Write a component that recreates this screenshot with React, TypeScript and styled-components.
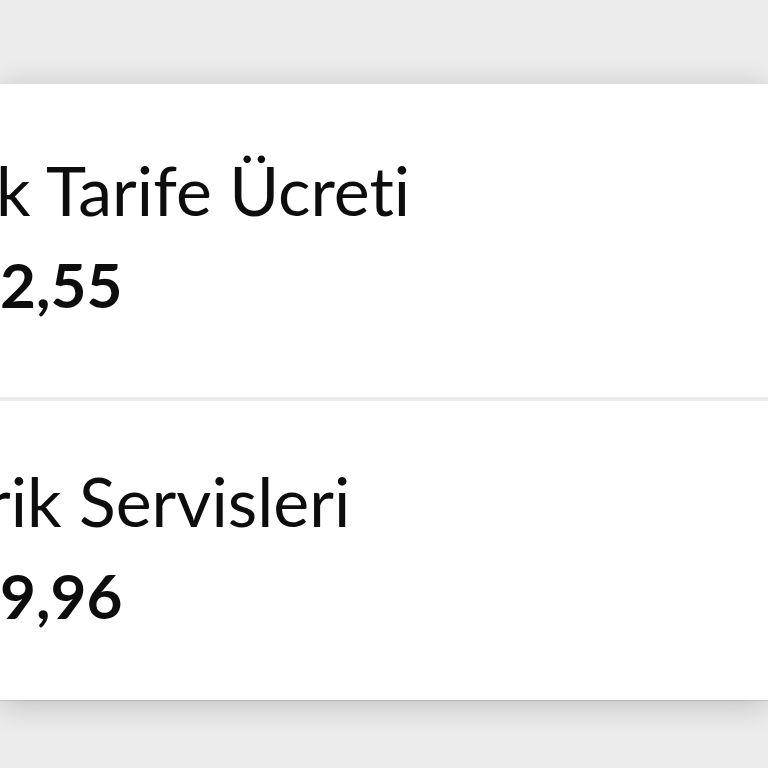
import React from "react";
import styled, { createGlobalStyle } from "styled-components";

const GlobalStyle = createGlobalStyle`
  html, body { margin: 0; padding: 0; background: #ececec; }
  body { font-family: 'Lato', 'Noto Sans', sans-serif; }
`;

const Page = styled.div`
  width: 768px;
  height: 768px;
  overflow: hidden;
  background: #ececec;
  padding-top: 84px;
  box-sizing: border-box;
`;

const Card = styled.section`
  background: #ffffff;
  width: 100%;
  display: flex;
  flex-direction: column;
  box-shadow: 0 -1px 0 #dedede, 0 -10px 22px rgba(0, 0, 0, 0.035),
    0 1px 1px rgba(0, 0, 0, 0.1), 0 8px 28px rgba(0, 0, 0, 0.16);
`;

const Row = styled.div<{ $top: number; $bottom: number; $divider?: boolean }>`
  display: flex;
  flex-direction: column;
  gap: 16px;
  padding: ${(p) => p.$top}px 0 ${(p) => p.$bottom}px 0;
  border-top: ${(p) => (p.$divider ? "4px solid #ececec" : "none")};
  overflow: hidden;
`;

const Label = styled.div<{ $shift: number }>`
  font-family: 'Lato', 'Noto Sans', sans-serif;
  font-size: 68px;
  font-weight: 400;
  line-height: 1.2;
  color: #0d0d0d;
  white-space: nowrap;
  font-variant-ligatures: none;
  margin-left: ${(p) => p.$shift}px;
`;

const Amount = styled.div`
  font-family: 'Lato', 'Noto Sans', sans-serif;
  font-size: 62px;
  font-weight: 700;
  line-height: 1.2;
  color: #0d0d0d;
  white-space: nowrap;
`;

const items = [
  { label: "k Tarife Ücreti", amount: "2,55", shift: -4, top: 65, bottom: 76 },
  { label: "rik Servisleri", amount: "9,96", shift: -14, top: 59, bottom: 68 },
];

export default function App() {
  return (
    <Page>
      <GlobalStyle />
      <Card>
        {items.map((it, i) => (
          <Row key={it.label} $top={it.top} $bottom={it.bottom} $divider={i > 0}>
            <Label $shift={it.shift}>{it.label}</Label>
            <Amount>{it.amount}</Amount>
          </Row>
        ))}
      </Card>
    </Page>
  );
}
